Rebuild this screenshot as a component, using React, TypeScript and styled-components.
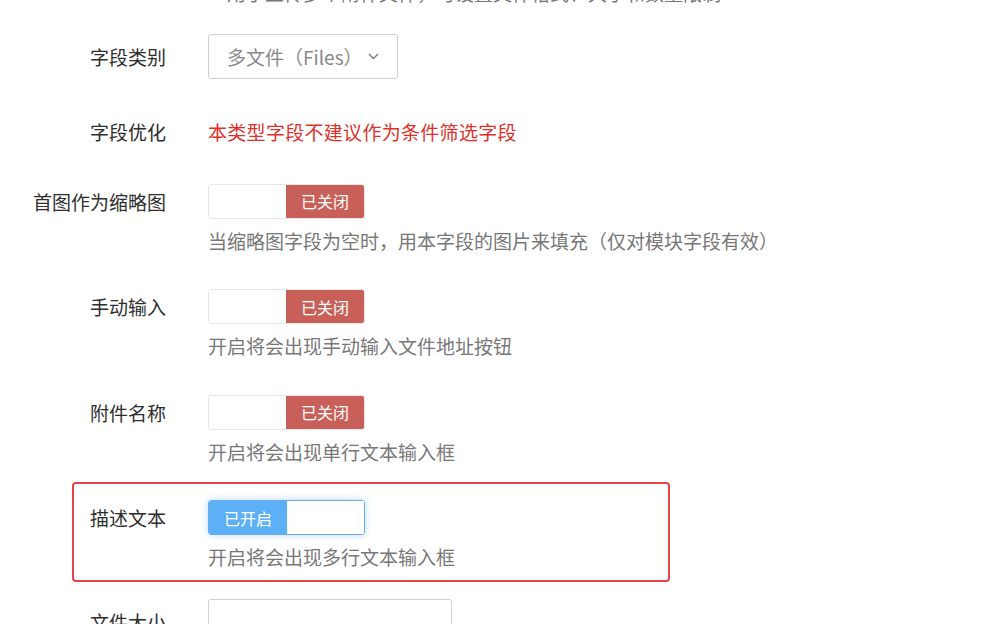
import React from "react";
import styled, { createGlobalStyle } from "styled-components";

const GlobalStyle = createGlobalStyle`
  html, body {
    margin: 0;
    padding: 0;
    background: #fff;
    overflow: hidden;
  }
  body {
    font-family: "Noto Sans CJK SC", "Noto Sans", "Liberation Sans", sans-serif;
    color: #333;
  }
`;

const Page = styled.div`
  width: 1000px;
  height: 624px;
  overflow: hidden;
`;

const Form = styled.div`
  display: flex;
  flex-direction: column;
  gap: 35px;
  margin-top: -21px;
`;

const Row = styled.div<{ $annotated?: boolean; $pull?: number }>`
  position: relative;
  display: grid;
  grid-template-columns: 166px 1fr;
  column-gap: 42px;
  align-items: start;
  margin-top: ${(p) => (p.$pull ? `${p.$pull}px` : "0")};

  ${(p) =>
    p.$annotated &&
    `
    &::after {
      content: "";
      position: absolute;
      top: -18px;
      bottom: -11px;
      left: 72px;
      width: 598px;
      border: 2px solid #e4444a;
      border-radius: 4px;
      box-sizing: border-box;
      pointer-events: none;
    }
  `}
`;

const Label = styled.div<{ $h?: number }>`
  text-align: right;
  font-size: 19px;
  color: #2e2e2e;
  line-height: ${(p) => p.$h ?? 35}px;
  white-space: nowrap;
`;

const Control = styled.div`
  display: flex;
  flex-direction: column;
  align-items: flex-start;
`;

const Help = styled.div<{ $flush?: boolean }>`
  margin-top: ${(p) => (p.$flush ? 0 : 8)}px;
  font-size: 19px;
  line-height: 27.5px;
  color: #777;
  white-space: nowrap;
`;

const Warn = styled.div`
  font-size: 19px;
  line-height: 35px;
  color: #e0302b;
  letter-spacing: 0.3px;
`;

const Select = styled.div`
  box-sizing: border-box;
  width: 190px;
  height: 45px;
  border: 1px solid #cfcfcf;
  border-radius: 3px;
  padding: 0 18px;
  display: flex;
  align-items: center;
  justify-content: space-between;
  font-size: 19px;
  color: #888;
`;

const Input = styled.div`
  box-sizing: border-box;
  width: 244px;
  height: 45px;
  border: 1px solid #d2d2d2;
  border-radius: 3px;
`;

const Switch = styled.div<{ $on?: boolean }>`
  box-sizing: border-box;
  width: 157px;
  height: 35px;
  display: flex;
  flex-direction: ${(p) => (p.$on ? "row" : "row-reverse")};
  border: 1px solid ${(p) => (p.$on ? "#6fa9e6" : "#e6e6ee")};
  border-radius: 3px;
  overflow: hidden;
  box-shadow: ${(p) => (p.$on ? "0 0 7px rgba(96, 168, 240, 0.45)" : "none")};
`;

const Knob = styled.div<{ $on?: boolean }>`
  width: 78px;
  display: flex;
  align-items: center;
  justify-content: center;
  font-size: 16px;
  color: #fff;
  background: ${(p) => (p.$on ? "#5cb0f6" : "#c95f59")};
`;

const Blank = styled.div`
  flex: 1;
  background: #fff;
`;

const Toggle = ({ on }: { on?: boolean }) => (
  <Switch $on={on}>
    <Knob $on={on}>{on ? "已开启" : "已关闭"}</Knob>
    <Blank />
  </Switch>
);

const Chevron = () => (
  <svg width="11" height="7" viewBox="0 0 11 7" fill="none">
    <path d="M1 1l4.5 4.5L10 1" stroke="#777" strokeWidth="1.4" />
  </svg>
);

type ToggleField = { label: string; help: string; on?: boolean; annotated?: boolean };

const toggles: ToggleField[] = [
  { label: "首图作为缩略图", help: "当缩略图字段为空时，用本字段的图片来填充（仅对模块字段有效）" },
  { label: "手动输入", help: "开启将会出现手动输入文件地址按钮" },
  { label: "附件名称", help: "开启将会出现单行文本输入框" },
  { label: "描述文本", help: "开启将会出现多行文本输入框", on: true, annotated: true },
];

export default function App() {
  return (
    <Page>
      <GlobalStyle />
      <Form>
        <Row>
          <Label />
          <Control>
            <Help $flush>　用于上传多个附件文件，可设置文件格式、大小和数量限制</Help>
          </Control>
        </Row>
        <Row $pull={-8}>
          <Label $h={45}>字段类别</Label>
          <Control>
            <Select>
              <span>多文件（Files）</span>
              <Chevron />
            </Select>
          </Control>
        </Row>
        <Row>
          <Label>字段优化</Label>
          <Control>
            <Warn>本类型字段不建议作为条件筛选字段</Warn>
          </Control>
        </Row>
        {toggles.map((t) => (
          <Row key={t.label} $annotated={t.annotated}>
            <Label>{t.label}</Label>
            <Control>
              <Toggle on={t.on} />
              <Help>{t.help}</Help>
            </Control>
          </Row>
        ))}
        <Row $pull={-7}>
          <Label $h={45}>文件大小</Label>
          <Control>
            <Input />
          </Control>
        </Row>
      </Form>
    </Page>
  );
}
